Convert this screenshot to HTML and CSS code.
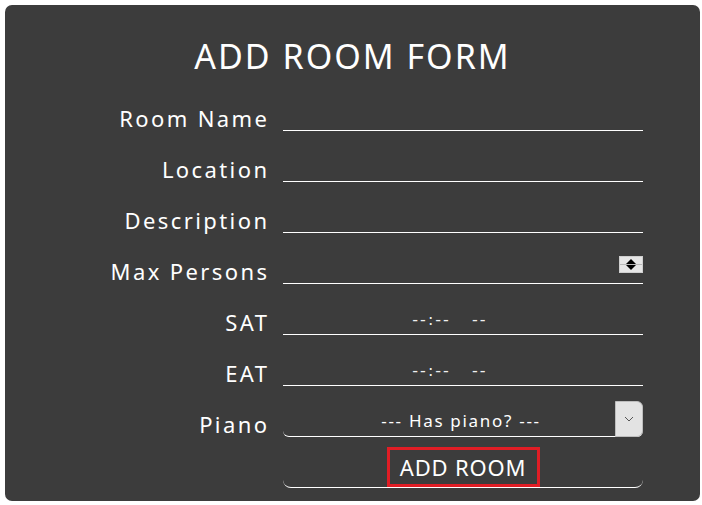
FILE: index.html
```html
<!DOCTYPE html>
<html>
<head>
<meta charset="utf-8">
<link rel="stylesheet" href="styles.css">
</head>
<body>
<div class="card">
  <h1 class="title">ADD ROOM FORM</h1>
  <form class="form">
    <label class="label">Room Name</label>
    <div class="field"></div>
    <label class="label">Location</label>
    <div class="field"></div>
    <label class="label">Description</label>
    <div class="field"></div>
    <label class="label">Max Persons</label>
    <div class="field field-num">
      <span class="spinner"><span class="up"></span><span class="divider"></span><span class="down"></span></span>
    </div>
    <label class="label">SAT</label>
    <div class="field field-time"><span class="time">--:--&nbsp;&nbsp;&nbsp;--</span></div>
    <label class="label">EAT</label>
    <div class="field field-time"><span class="time">--:--&nbsp;&nbsp;&nbsp;--</span></div>
    <label class="label">Piano</label>
    <div class="field field-select">
      <span class="select-text">--- Has piano? ---</span>
      <span class="select-btn">
        <svg width="10" height="6" viewBox="0 0 10 6"><path d="M1 1 L5 5 L9 1" fill="none" stroke="#555" stroke-width="1"/></svg>
      </span>
    </div>
    <div class="spacer"></div>
    <div class="field field-submit"><span class="submit">ADD ROOM</span></div>
  </form>
</div>
</body>
</html>
```

FILE: styles.css
```css
html, body { margin: 0; padding: 0; background: #ffffff; }
body { padding: 5px 2px 4px 5px; }
.card {
  width: 695px;
  height: 496px;
  background: #3c3c3c;
  border-radius: 7px;
  color: #ffffff;
  font-family: "Noto Sans", "DejaVu Sans", sans-serif;
  box-sizing: border-box;
}
.title {
  margin: 0;
  padding-top: 33px;
  height: 42px;
  text-align: center;
  font-weight: 400;
  font-size: 34px;
  line-height: 36px;
  letter-spacing: 2px;
}
.form {
  display: grid;
  grid-template-columns: 262px 360px;
  grid-auto-rows: 51px;
  column-gap: 16px;
  margin: 0;
}
.label {
  align-self: end;
  text-align: right;
  font-size: 22px;
  line-height: 24px;
  padding-bottom: 1px;
  letter-spacing: 2.4px;
  margin-right: -2.4px;
}
.field {
  align-self: end;
  height: 30px;
  border-bottom: 1px solid #ffffff;
  position: relative;
  box-sizing: border-box;
}
.spinner {
  position: absolute;
  right: 0;
  top: 2px;
  width: 24px;
  height: 17px;
  background: #e6e6e6;
  border: 1px solid #cfcfcf;
  box-sizing: border-box;
  display: flex;
  flex-direction: column;
  align-items: center;
  justify-content: space-between;
  padding: 2px 0;
}
.divider { width: 100%; height: 1px; background: #b8b8b8; }
.up {
  width: 0; height: 0;
  border-left: 5px solid transparent;
  border-right: 5px solid transparent;
  border-bottom: 5px solid #000;
}
.down {
  width: 0; height: 0;
  border-left: 5px solid transparent;
  border-right: 5px solid transparent;
  border-top: 5px solid #000;
}
.field-time {
  display: flex;
  justify-content: center;
  align-items: center;
}
.time {
  font-family: "DejaVu Sans", sans-serif;
  font-size: 16px;
  letter-spacing: 2px;
  margin-left: -26px;
  color: #f0f0f0;
}
.field-select {
  height: 36px;
  border-radius: 0 6px 6px 6px;
  display: flex;
  align-items: center;
  justify-content: center;
}
.select-text {
  font-size: 17px;
  letter-spacing: 1.7px;
  margin-left: -4px;
  padding-top: 4px;
}
.select-btn {
  position: absolute;
  right: 0;
  top: 0;
  width: 28px;
  height: 36px;
  background: #e3e3e3;
  border: 1px solid #bdbdbd;
  border-radius: 0 6px 6px 0;
  box-sizing: border-box;
  display: flex;
  align-items: center;
  justify-content: center;
}
.spacer { height: 0; }
.field-submit {
  height: 41px;
  border-radius: 0 0 8px 8px;
  display: flex;
  justify-content: center;
  align-items: flex-start;
}
.submit {
  display: block;
  width: 153px;
  height: 40px;
  border: 3px solid #e11d25;
  box-sizing: border-box;
  text-align: center;
  font-size: 22px;
  line-height: 35px;
  letter-spacing: 0.8px;
}
```
